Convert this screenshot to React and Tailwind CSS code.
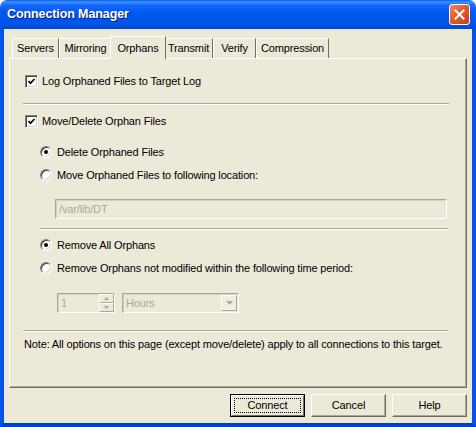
import React from "react";

const Check = () => (
  <span className="w-[13px] h-[13px] shrink-0 flex items-center justify-center bg-white border border-t-[#808080] border-l-[#808080] border-r-white border-b-white shadow-[inset_1px_1px_0_#404040,inset_-1px_-1px_0_#d4d0c8]">
    <svg width="9" height="9" viewBox="0 0 9 9">
      <polyline points="1.5,4 3.5,6.2 7.5,2" fill="none" stroke="#000" strokeWidth="1.7" />
    </svg>
  </span>
);

const Radio = ({ on }) => (
  <span className="w-[12px] h-[12px] shrink-0 rounded-full flex items-center justify-center bg-white border border-t-[#808080] border-l-[#808080] border-r-white border-b-white shadow-[inset_1px_1px_0_#404040,inset_-1px_-1px_0_#d4d0c8]">
    {on && <span className="w-[4px] h-[4px] rounded-full bg-black" />}
  </span>
);

const Sep = ({ className }) => (
  <div className={`h-[2px] border-t border-t-[#aca899] border-b border-b-white ${className}`} />
);

const Tab = ({ label, active, w }) =>
  active ? (
    <div
      className={`${w} h-[23px] -mx-[2px] -mb-[1px] z-10 relative bg-[#ece9d8] border-t border-l border-white border-r border-r-[#716f64] flex items-start justify-center pt-[3px]`}
    >
      {label}
    </div>
  ) : (
    <div
      className={`${w} h-[20px] bg-[#ece9d8] border-t border-l border-white border-r border-r-[#716f64] flex items-center justify-center`}
    >
      {label}
    </div>
  );

const Button = ({ label, main }) =>
  main ? (
    <div className="w-[75px] h-[23px] border border-black">
      <div className="w-full h-full border border-t-white border-l-white border-r-[#716f64] border-b-[#716f64] bg-[#ece9d8] p-[2px]">
        <div className="w-full h-full border border-dotted border-black flex items-center justify-center">
          {label}
        </div>
      </div>
    </div>
  ) : (
    <div className="w-[75px] h-[23px] border border-t-white border-l-white border-r-[#716f64] border-b-[#716f64] shadow-[inset_-1px_-1px_0_#aca899] bg-[#ece9d8] flex items-center justify-center">
      {label}
    </div>
  );

const Sunken = "border border-t-[#aca899] border-l-[#aca899] border-r-white border-b-white shadow-[inset_1px_1px_0_#d4d0c8]";

export default function App() {
  return (
    <div className="w-[476px] h-[427px] flex flex-col font-['Liberation_Sans',Arial,sans-serif] text-[11px] tracking-[-0.15px] text-black select-none">
      {/* Title bar */}
      <div className="h-[29px] shrink-0 rounded-t-[7px] flex items-center justify-between pl-[7px] pr-[6px] bg-[linear-gradient(to_bottom,#0a5ee8_0%,#3d8fff_7%,#1468ff_18%,#0058ee_45%,#0054e6_85%,#0046d2_100%)]">
        <span className="text-white font-bold text-[12.5px] tracking-[-0.1px] [text-shadow:1px_1px_0_#0a1e6a]">
          Connection Manager
        </span>
        <div className="w-[21px] h-[21px] rounded-[3px] border border-white bg-[linear-gradient(135deg,#f08a5e_0%,#e45a2c_45%,#c8401a_100%)] flex items-center justify-center">
          <svg width="11" height="11" viewBox="0 0 11 11">
            <path d="M1.5 1.5 L9.5 9.5 M9.5 1.5 L1.5 9.5" stroke="#fff" strokeWidth="2" strokeLinecap="square" />
          </svg>
        </div>
      </div>

      {/* Body */}
      <div className="flex-1 flex flex-col border-x-4 border-b-4 border-x-[#0055e5] border-b-[#0041c8] bg-[#ece9d8] pt-[7px] pl-[5px] pr-[5px]">
        {/* Tabs */}
        <div className="flex items-end h-[22px] pl-[3px]">
          <Tab label="Servers" w="w-[47px]" />
          <Tab label="Mirroring" w="w-[53px]" />
          <Tab label="Orphans" active w="w-[56px]" />
          <Tab label="Transmit" w="w-[49px]" />
          <Tab label="Verify" w="w-[43px]" />
          <Tab label="Compression" w="w-[73px]" />
        </div>

        {/* Panel */}
        <div className="h-[330px] border-t border-l border-white border-r border-r-[#716f64] border-b border-b-[#716f64] shadow-[inset_-1px_-1px_0_#aca899] bg-[#ece9d8]">
          <div className="flex items-center mt-[16px] ml-[15px] gap-[4px] leading-[13px]">
            <Check />
            <span>Log Orphaned Files to Target Log</span>
          </div>
          <Sep className="mt-[15px] ml-[13px] w-[426px]" />
          <div className="flex items-center mt-[10px] ml-[15px] gap-[4px] leading-[13px]">
            <Check />
            <span>Move/Delete Orphan Files</span>
          </div>
          <div className="flex items-center mt-[18px] ml-[30px] gap-[5px] leading-[12px]">
            <Radio on />
            <span>Delete Orphaned Files</span>
          </div>
          <div className="flex items-center mt-[11px] ml-[30px] gap-[5px] leading-[12px]">
            <Radio />
            <span>Move Orphaned Files to following location:</span>
          </div>
          <div className={`mt-[18px] ml-[45px] w-[392px] h-[20px] ${Sunken} flex items-center pl-[3px] text-[#aca899]`}>
            /var/lib/DT
          </div>
          <Sep className="mt-[9px] ml-[30px] w-[408px]" />
          <div className="flex items-center mt-[9px] ml-[30px] gap-[5px] leading-[12px]">
            <Radio on />
            <span>Remove All Orphans</span>
          </div>
          <div className="flex items-center mt-[11px] ml-[30px] gap-[5px] leading-[12px]">
            <Radio />
            <span>Remove Orphans not modified within the following time period:</span>
          </div>
          <div className="flex mt-[19px] ml-[47px] gap-[7px] h-[20px] text-[#aca899]">
            <div className={`w-[58px] h-full ${Sunken} flex items-center`}>
              <span className="flex-1 pl-[3px]">1</span>
              <div className="w-[15px] h-full flex flex-col">
                <div className="flex-1 flex items-center justify-center border border-t-white border-l-white border-r-[#aca899] border-b-[#aca899] bg-[#ece9d8]">
                  <svg width="5" height="3" viewBox="0 0 5 3"><path d="M2.5 0 L5 3 L0 3z" fill="#aca899" /></svg>
                </div>
                <div className="flex-1 flex items-center justify-center border border-t-white border-l-white border-r-[#aca899] border-b-[#aca899] bg-[#ece9d8]">
                  <svg width="5" height="3" viewBox="0 0 5 3"><path d="M0 0 L5 0 L2.5 3z" fill="#aca899" /></svg>
                </div>
              </div>
            </div>
            <div className={`w-[117px] h-full ${Sunken} flex items-center`}>
              <span className="flex-1 pl-[3px]">Hours</span>
              <div className="w-[16px] h-[16px] mr-[1px] flex items-center justify-center border border-t-white border-l-white border-r-[#aca899] border-b-[#aca899] bg-[#f0eee4]">
                <svg width="7" height="4" viewBox="0 0 7 4"><path d="M0 0 L7 0 L3.5 4z" fill="#aca899" /></svg>
              </div>
            </div>
          </div>
          <Sep className="mt-[17px] ml-[13px] w-[425px]" />
          <div className="mt-[6px] ml-[14px] leading-[13px]">
            Note: All options on this page (except move/delete) apply to all connections to this target.
          </div>
        </div>

        {/* Buttons */}
        <div className="flex justify-end gap-[6px] mt-[6px]">
          <Button label="Connect" main />
          <Button label="Cancel" />
          <Button label="Help" />
        </div>
      </div>
    </div>
  );
}
